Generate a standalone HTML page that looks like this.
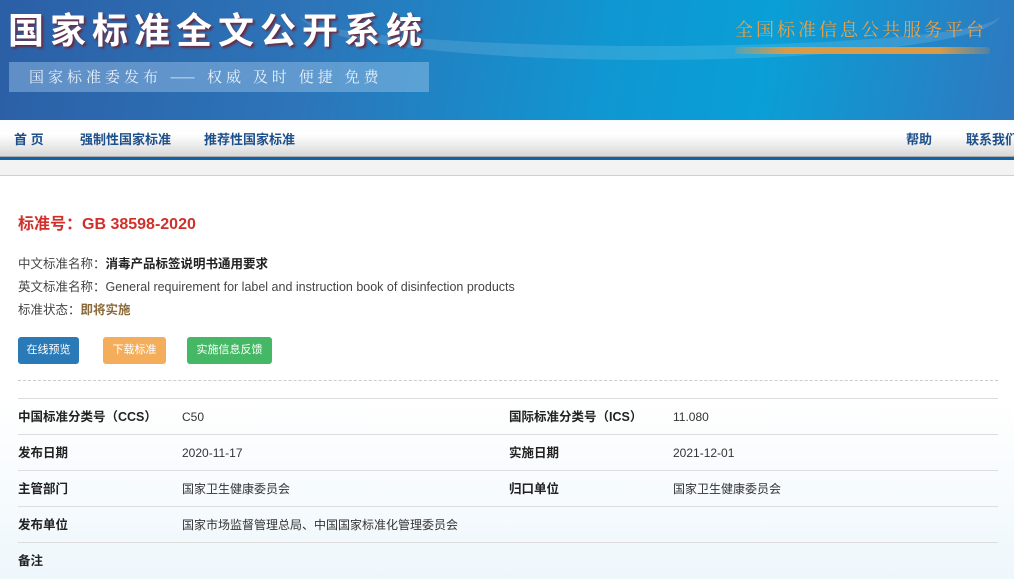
<!DOCTYPE html>
<html><head><meta charset="utf-8"><style>
*{margin:0;padding:0;box-sizing:border-box}
body{width:1014px;height:579px;overflow:hidden;font-family:"Liberation Sans","Noto Sans CJK SC",sans-serif;background:linear-gradient(#fff 0,#fff 400px,#eef7fc 579px)}
.banner{position:relative;height:120px;background:linear-gradient(100deg,#2b5fa6 0%,#2d74b8 30%,#0f97d2 60%,#0a9fd6 75%,#2f78bf 100%);overflow:hidden}
.t1{position:absolute;left:8px;top:2px;font-size:36px;font-weight:bold;color:#fff;letter-spacing:6px;text-shadow:2px 2px 2px #6a2a40;font-family:"Noto Sans CJK SC",sans-serif;white-space:nowrap}
.sub{position:absolute;left:9px;top:62px;width:420px;height:30px;background:rgba(160,200,235,.45);color:#e8f0f8;font-size:15px;line-height:30px;padding-left:20px;letter-spacing:4px;font-family:"Noto Serif CJK SC",serif;white-space:nowrap}
.t2{position:absolute;left:735px;top:16px;color:#f0a040;font-size:18px;letter-spacing:3px;font-family:"Noto Serif CJK SC",serif;white-space:nowrap}
.stroke{position:absolute;left:735px;top:47px;width:255px;height:7px;border-radius:4px;background:linear-gradient(90deg,rgba(230,150,60,.2),#d99a4a 20%,#d99a4a 80%,rgba(230,150,60,.2))}
.swoosh{position:absolute;left:300px;top:-30px;width:700px;height:90px;border-radius:50%;border-bottom:14px solid rgba(255,255,255,.12)}
.nav{height:37px;background:linear-gradient(#fafcff,#fff 40%,#d8d8d8);border-bottom:1px solid #aaa;position:relative;font-size:13px;font-weight:bold;color:#1d4f8a;overflow:hidden}
.nav span{position:absolute;top:9px;white-space:nowrap}
.bar{height:3px;background:#1063a8}
.gray{height:16px;background:#f3f3f3;border-bottom:1px solid #a8dcf4}
.red{position:absolute;left:18px;top:210px;font-size:16px;font-weight:bold;color:#d0302a}
.ln{position:absolute;left:18px;font-size:12.5px;color:#444;white-space:nowrap}
.btn{position:absolute;top:337px;height:27px;line-height:27px;font-size:11px;color:#fff;border-radius:3px;text-align:center}
.dash{position:absolute;left:18px;top:380px;width:980px;border-top:1px dashed #ccc}
.row{position:absolute;left:18px;width:980px;border-top:1px solid #ddd;height:36px;font-size:12px;color:#333}
.row b{position:absolute;top:0;line-height:36px;font-size:12.5px;color:#222;white-space:nowrap}
.row i{position:absolute;top:0;line-height:36px;font-style:normal;white-space:nowrap}
</style></head><body>
<div class="banner"><div class="swoosh"></div>
<div class="t1">国家标准全文公开系统</div>
<div class="sub">国家标准委发布 —— 权威 及时 便捷 免费</div>
<div class="t2">全国标准信息公共服务平台</div><div class="stroke"></div>
</div>
<div class="nav"><span style="left:14px">首 页</span><span style="left:80px">强制性国家标准</span><span style="left:204px">推荐性国家标准</span><span style="left:906px">帮助</span><span style="left:966px">联系我们</span></div>
<div class="bar"></div><div class="gray"></div>
<div class="red">标准号：GB 38598-2020</div>
<div class="ln" style="top:253px">中文标准名称：<b style="color:#222">消毒产品标签说明书通用要求</b></div>
<div class="ln" style="top:276px">英文标准名称：General requirement for label and instruction book of disinfection products</div>
<div class="ln" style="top:299px">标准状态：<b style="color:#8a6a3a">即将实施</b></div>
<div class="btn" style="left:18px;width:61px;background:#2a7ab8">在线预览</div>
<div class="btn" style="left:103px;width:63px;background:#f4ad5a">下载标准</div>
<div class="btn" style="left:187px;width:85px;background:#45b865">实施信息反馈</div>
<div class="dash"></div>
<div class="row" style="top:398px"><b style="left:0">中国标准分类号（CCS）</b><i style="left:164px">C50</i><b style="left:491px">国际标准分类号（ICS）</b><i style="left:655px">11.080</i></div>
<div class="row" style="top:434px"><b style="left:0">发布日期</b><i style="left:164px">2020-11-17</i><b style="left:491px">实施日期</b><i style="left:655px">2021-12-01</i></div>
<div class="row" style="top:470px"><b style="left:0">主管部门</b><i style="left:164px">国家卫生健康委员会</i><b style="left:491px">归口单位</b><i style="left:655px">国家卫生健康委员会</i></div>
<div class="row" style="top:506px"><b style="left:0">发布单位</b><i style="left:164px">国家市场监督管理总局、中国国家标准化管理委员会</i></div>
<div class="row" style="top:542px"><b style="left:0">备注</b></div>
</body></html>
